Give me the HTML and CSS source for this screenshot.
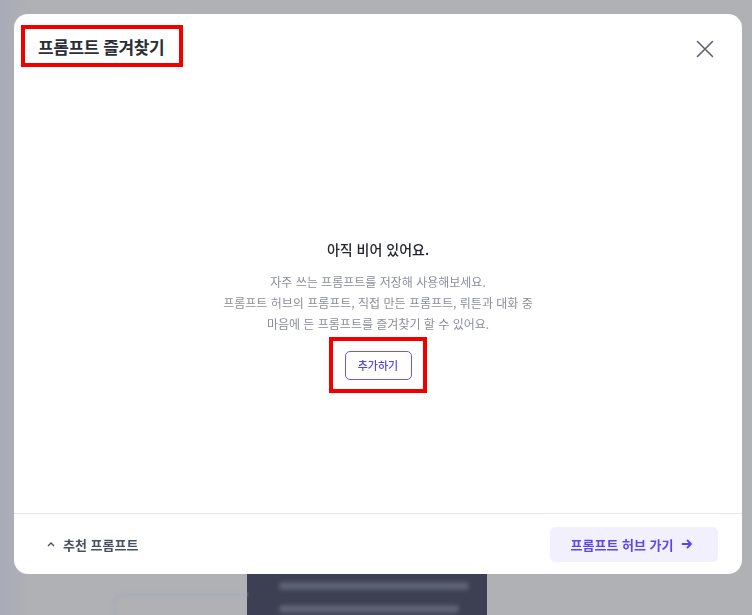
FILE: index.html
```html
<!DOCTYPE html>
<html lang="ko">
<head>
<meta charset="utf-8">
<link rel="stylesheet" href="styles.css">
</head>
<body>
<div class="page">
  <div class="under">
    <div class="under-box"></div>
    <div class="under-tip">
      <div class="blur-line"></div>
      <div class="blur-line short"></div>
    </div>
  </div>
</div>

<div class="modal">
  <div class="modal-header">
    <h2 class="modal-title mark">프롬프트 즐겨찾기</h2>
    <button class="close-btn" aria-label="닫기">
      <svg width="18" height="18" viewBox="0 0 18 18"><path d="M1.5 1.5 L16.5 16.5 M16.5 1.5 L1.5 16.5" stroke="#5f6271" stroke-width="1.6" stroke-linecap="round" fill="none"/></svg>
    </button>
  </div>
  <div class="modal-body">
    <p class="empty-title">아직 비어 있어요.</p>
    <p class="empty-desc">자주 쓰는 프롬프트를 저장해 사용해보세요.<br>프롬프트 허브의 프롬프트, 직접 만든 프롬프트, 뤼튼과 대화 중<br>마음에 든 프롬프트를 즐겨찾기 할 수 있어요.</p>
    <div class="add-wrap mark">
      <button class="add-btn">추가하기</button>
    </div>
  </div>
  <div class="modal-footer">
    <button class="recommend">
      <svg width="8" height="6" viewBox="0 0 8 6"><path d="M1 5 L4 2 L7 5" stroke="#4b5060" stroke-width="1.4" fill="none"/></svg>
      <span>추천 프롬프트</span>
    </button>
    <button class="hub-btn">
      <span>프롬프트 허브 가기</span>
      <svg width="12" height="12" viewBox="0 0 12 12"><path d="M1.5 6 H10 M6.5 2.5 L10 6 L6.5 9.5" stroke="#5a47ee" stroke-width="1.8" fill="none" stroke-linecap="round" stroke-linejoin="round"/></svg>
    </button>
  </div>
</div>
</body>
</html>
```
FILE: styles.css
```css
* { box-sizing: border-box; }
html, body { margin: 0; padding: 0; }
body {
  width: 752px;
  height: 615px;
  overflow: hidden;
  background: #b0b1b5;
  font-family: "Noto Sans CJK KR", "Noto Sans", sans-serif;
}
.page {
  height: 615px;
  background: linear-gradient(90deg, #a8abb8 0px, #b0b1b5 30px, #b0b1b5 100%);
}
.under {
  padding-top: 560px;
  display: flex;
  align-items: flex-start;
}
.under-box {
  margin-top: 33px;
  margin-left: 113px;
  width: 134px;
  height: 40px;
  border-top: 3px solid #a8acb9;
  border-left: 3px solid #a8acb9;
  border-top-left-radius: 10px;
  filter: blur(1.5px);
}
.under-tip {
  width: 240px;
  height: 60px;
  background: #3c4052;
  padding: 22px 18px 0;
}
.blur-line {
  height: 8px;
  width: 190px;
  background: #5e6274;
  margin-left: 14px;
  border-radius: 4px;
  filter: blur(2px);
}
.blur-line.short { margin-top: 15px; width: 180px; }

.modal {
  position: fixed;
  left: 14px;
  top: 14px;
  width: 728px;
  height: 560px;
  background: #fff;
  border-radius: 14px;
  display: flex;
  flex-direction: column;
}
.modal-header {
  height: 68px;
  display: flex;
  align-items: flex-start;
  justify-content: space-between;
  padding: 11px 28px 0 7px;
}
.mark { border: 4px solid #f20000; }
.modal-title {
  margin: 0;
  width: 162px;
  height: 42px;
  padding: 0 0 0 13px;
  font-size: 17px;
  font-weight: 700;
  color: #2b2e37;
  line-height: 35px;
  letter-spacing: -0.4px;
}
.close-btn {
  margin-top: 15px;
  border: 0;
  background: none;
  padding: 0;
  width: 18px;
  height: 18px;
  display: flex;
}
.modal-body {
  flex: 1;
  display: flex;
  flex-direction: column;
  align-items: center;
  padding-top: 157px;
  border-bottom: 1px solid #e4e4ec;
}
.empty-title {
  margin: 0;
  font-size: 14px;
  font-weight: 500;
  color: #23252c;
  line-height: 20px;
}
.empty-desc {
  margin: 12px 0 0;
  text-align: center;
  font-size: 12px;
  color: #8b8e99;
  line-height: 21px;
}
.add-wrap {
  margin-top: 3px;
  width: 98px;
  height: 56px;
  display: flex;
  align-items: center;
  justify-content: center;
}
.add-btn {
  width: 67px;
  height: 29px;
  border: 1px solid #6a58f0;
  border-radius: 5px;
  background: #fff;
  color: #5446e6;
  font-family: inherit;
  font-size: 11px;
  font-weight: 500;
  padding: 0;
}
.modal-footer {
  height: 60px;
  display: flex;
  align-items: center;
  justify-content: space-between;
  padding: 0 24px 0 33px;
}
.recommend {
  border: 0;
  background: none;
  padding: 0;
  display: flex;
  align-items: center;
  gap: 8px;
  font-family: inherit;
  font-size: 13px;
  font-weight: 700;
  color: #4b5060;
}
.hub-btn {
  width: 168px;
  height: 35px;
  border: 0;
  border-radius: 5px;
  background: #f2f0ff;
  display: flex;
  align-items: center;
  justify-content: center;
  gap: 8px;
  font-family: inherit;
  font-size: 13px;
  font-weight: 700;
  color: #5a47ee;
  padding: 0 4px 0 0;
}
```
